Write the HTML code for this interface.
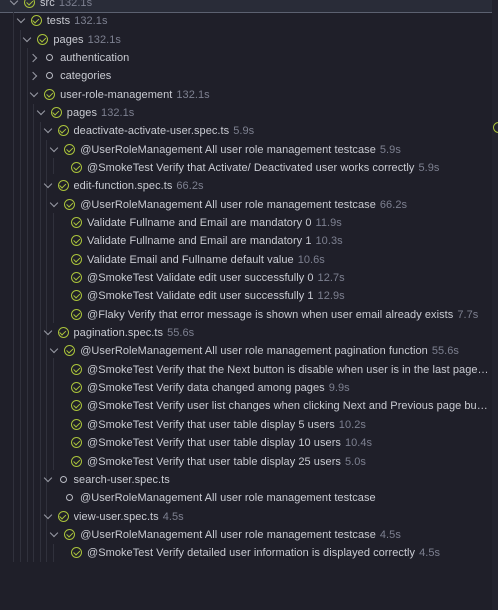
<!DOCTYPE html>
<html style="height:610px;overflow:hidden"><head><meta charset="utf-8"><style>
body{margin:0;width:498px;height:610px;background:#1f1f29;overflow:hidden;font-family:"Liberation Sans",sans-serif;font-size:11px;color:#c9cbd2;position:relative}
.top{position:absolute;left:0;top:0;width:492px;height:12px;background:#292c38;border-bottom:1px solid #5c6170}
.sb{position:absolute;left:492px;top:0;width:6px;height:610px;background:#23232e}
.r{position:absolute;height:16px;line-height:16px;white-space:nowrap;overflow:hidden;text-overflow:ellipsis;letter-spacing:0.05px}
.t{color:#7d8090;margin-left:4px}
.ic{position:absolute;top:2px;width:9px;height:9px;border:1.5px solid #a9c23b;border-radius:50%}
.ic:after{content:"";position:absolute;left:2.6px;top:1px;width:2.5px;height:4.5px;border:solid #a9c23b;border-width:0 1.4px 1.4px 0;transform:rotate(45deg)}
.o{position:absolute;top:4.5px;width:5px;height:5px;border:1.5px solid #b9bbc3;border-radius:50%}
.cv{position:absolute;top:3px;width:5px;height:5px;border:solid #9a9ca6;border-width:0 1.2px 1.2px 0}
.g{position:absolute;width:1px;background:#30313c}
</style></head><body>
<div class="top"></div>
<div class="sb"></div>
<div class="g" style="left:13px;top:12px;height:550px"></div><div class="g" style="left:20px;top:30px;height:532px"></div><div class="g" style="left:27px;top:48px;height:514px"></div><div class="g" style="left:33px;top:104px;height:458px"></div><div class="g" style="left:40px;top:122px;height:440px"></div><div class="g" style="left:46px;top:140px;height:422px"></div><div class="g" style="left:53px;top:158px;height:16px"></div><div class="g" style="left:53px;top:213px;height:110px"></div><div class="g" style="left:53px;top:358px;height:112px"></div><div class="g" style="left:53px;top:544px;height:18px"></div>
<div style="position:absolute;left:493px;top:122px;width:9px;height:9px;border:1.5px solid #a9c23b;border-radius:50%"></div>
<div id="tree"></div>
<script>
var rows=[
[0,'c','src','132.1s',1],[1,'c','tests','132.1s',1],[2,'c','pages','132.1s',1],
[3,'o','authentication','',2],[3,'o','categories','',2],[3,'c','user-role-management','132.1s',1],
[4,'c','pages','132.1s',1],[5,'c','deactivate-activate-user.spec.ts','5.9s',1],
[6,'c','@UserRoleManagement All user role management testcase','5.9s',1],
[7,'c','@SmokeTest Verify that Activate/ Deactivated user works correctly','5.9s',0],
[5,'c','edit-function.spec.ts','66.2s',1],
[6,'c','@UserRoleManagement All user role management testcase','66.2s',1],
[7,'c','Validate Fullname and Email are mandatory 0','11.9s',0],
[7,'c','Validate Fullname and Email are mandatory 1','10.3s',0],
[7,'c','Validate Email and Fullname default value','10.6s',0],
[7,'c','@SmokeTest Validate edit user successfully 0','12.7s',0],
[7,'c','@SmokeTest Validate edit user successfully 1','12.9s',0],
[7,'c','@Flaky Verify that error message is shown when user email already exists','7.7s',0],
[5,'c','pagination.spec.ts','55.6s',1],
[6,'c','@UserRoleManagement All user role management pagination function','55.6s',1],
[7,'c','@SmokeTest Verify that the Next button is disable when user is in the last page','9.2s',0],
[7,'c','@SmokeTest Verify data changed among pages','9.9s',0],
[7,'c','@SmokeTest Verify user list changes when clicking Next and Previous page button','',0],
[7,'c','@SmokeTest Verify that user table display 5 users','10.2s',0],
[7,'c','@SmokeTest Verify that user table display 10 users','10.4s',0],
[7,'c','@SmokeTest Verify that user table display 25 users','5.0s',0],
[5,'o','search-user.spec.ts','',1],
[6,'o','@UserRoleManagement All user role management testcase','',0],
[5,'c','view-user.spec.ts','4.5s',1],
[6,'c','@UserRoleManagement All user role management testcase','4.5s',1],
[7,'c','@SmokeTest Verify detailed user information is displayed correctly','4.5s',0]];
var h='';
rows.forEach(function(r,i){
 var y=3+i*18.34-8, lv=r[0], ix=30+6.7*lv; if(r[4]==0&&lv==6)ix=70; if(lv==7)ix=77;
 var cx=ix-16;
 if(r[4]==1)h+='<div class="cv" style="left:'+(cx-3)+'px;top:'+(y+3)+'px;transform:rotate(45deg)"></div>';
 if(r[4]==2)h+='<div class="cv" style="left:'+(cx-4)+'px;top:'+(y+5)+'px;transform:rotate(-45deg)"></div>';
 if(r[1]=='c')h+='<div class="ic" style="left:'+(ix-6)+'px;top:'+(y+2)+'px"></div>';
 else h+='<div class="o" style="left:'+(ix-4)+'px;top:'+(y+4)+'px"></div>';
 var tx=ix+10;
 h+='<div class="r" style="left:'+tx+'px;top:'+y+'px;max-width:'+(490-tx)+'px">'+r[2]+(r[3]?'<span class="t">'+r[3]+'</span>':'')+'</div>';
});
document.getElementById('tree').innerHTML=h;
</script>
</body></html>
